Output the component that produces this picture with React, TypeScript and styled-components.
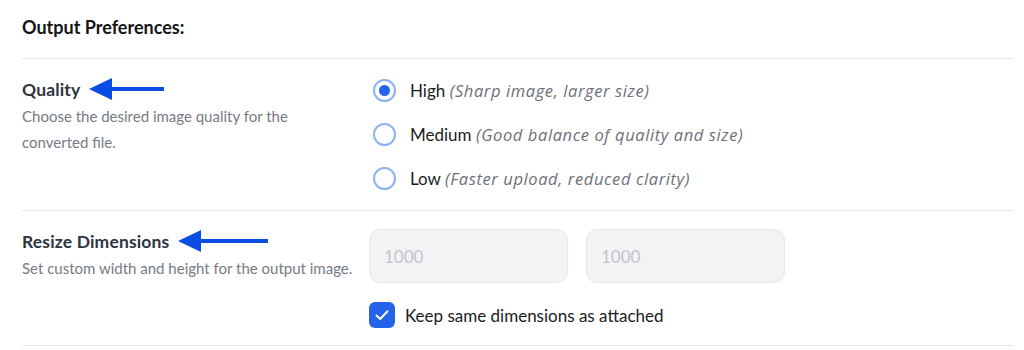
import { memo } from "react";
import styled, { createGlobalStyle } from "styled-components";

const GlobalStyle = createGlobalStyle`
  html, body {
    margin: 0;
    padding: 0;
    background: #ffffff;
  }
  body {
    font-family: "Lato", "Open Sans", sans-serif;
    color: #1f2937;
  }
`;

const qualityOptions = [
  { name: "High", hint: "(Sharp image, larger size)", checked: true },
  { name: "Medium", hint: "(Good balance of quality and size)", checked: false },
  { name: "Low", hint: "(Faster upload, reduced clarity)", checked: false },
];

const Arrow = ({ length }: { length: number }) => (
  <ArrowSvg width={length} height={24} viewBox={`0 0 ${length} 24`}>
    <path d={`M0 12 L23 1 L23 23 Z`} fill="#0a4de3" />
    <rect x={20} y={10} width={length - 20} height={4} fill="#0a4de3" />
  </ArrowSvg>
);

const App = () => {
  return (
    <>
      <GlobalStyle />
      <Page>
        <Heading>Output Preferences:</Heading>

        <Section>
          <LabelCol>
            <TitleRow>
              <Title>Quality</Title>
              <Arrow length={75} />
            </TitleRow>
            <Desc>
              Choose the desired image quality for the
              <br />
              converted file.
            </Desc>
          </LabelCol>
          <ControlCol>
            <RadioList>
              {qualityOptions.map((opt) => (
                <RadioRow key={opt.name}>
                  <RadioCircle checked={opt.checked} />
                  <OptionText>
                    {opt.name} <Hint>{opt.hint}</Hint>
                  </OptionText>
                </RadioRow>
              ))}
            </RadioList>
          </ControlCol>
        </Section>

        <Section>
          <LabelCol>
            <TitleRow>
              <Title>Resize Dimensions</Title>
              <Arrow length={90} />
            </TitleRow>
            <Desc>Set custom width and height for the output image.</Desc>
          </LabelCol>
          <ControlCol>
            <InputRow>
              <SizeInput placeholder="1000" disabled />
              <SizeInput placeholder="1000" disabled />
            </InputRow>
            <CheckRow>
              <CheckBox>
                <svg width="16" height="16" viewBox="0 0 16 16">
                  <path
                    d="M2.5 8.5 L6.2 12 L13.5 4.2"
                    fill="none"
                    stroke="#ffffff"
                    strokeWidth="2"
                    strokeLinecap="round"
                    strokeLinejoin="round"
                  />
                </svg>
              </CheckBox>
              <CheckText>Keep same dimensions as attached</CheckText>
            </CheckRow>
          </ControlCol>
        </Section>
      </Page>
    </>
  );
};

export default memo(App);

const Page = styled.div`
  width: 992px;
  padding: 16px 10px 0 22px;
`;

const Heading = styled.div`
  font-size: 18px;
  font-weight: 700;
  color: #151515;
  line-height: 22px;
  padding-bottom: 20px;
`;

const Section = styled.div`
  display: flex;
  border-top: 1.5px solid #e6e6e6;
  padding: 18px 0 20px;

  &:last-child {
    padding-bottom: 17px;
    border-bottom: 1.5px solid #e6e6e6;
  }
`;

const LabelCol = styled.div`
  width: 347px;
  flex-shrink: 0;
`;

const TitleRow = styled.div`
  display: flex;
  align-items: center;
  gap: 9px;
  height: 24px;
`;

const Title = styled.div`
  font-size: 17.5px;
  font-weight: 700;
  color: #2e3440;
  letter-spacing: 0.15px;
`;

const ArrowSvg = styled.svg`
  display: block;
`;

const Desc = styled.div`
  font-size: 15px;
  color: #767b84;
  line-height: 26px;
  margin-top: 2px;
`;

const ControlCol = styled.div`
  display: flex;
  flex-direction: column;
`;

const RadioList = styled.div`
  display: flex;
  flex-direction: column;
  gap: 21px;
  padding-left: 4px;
  padding-top: 2px;
`;

const RadioRow = styled.div`
  display: flex;
  align-items: center;
  gap: 14px;
  height: 23px;
`;

const RadioCircle = styled.span<{ checked: boolean }>`
  width: 19px;
  height: 19px;
  border-radius: 50%;
  border: 2px solid #8fb1f5;
  display: flex;
  align-items: center;
  justify-content: center;
  flex-shrink: 0;

  &::after {
    content: "";
    display: ${(p) => (p.checked ? "block" : "none")};
    width: 11px;
    height: 11px;
    border-radius: 50%;
    background: #2563eb;
  }
`;

const OptionText = styled.span`
  font-size: 17px;
  color: #1c1c1c;
`;

const Hint = styled.i`
  font-family: "Open Sans", sans-serif;
  font-size: 16.5px;
  letter-spacing: 0.6px;
  color: #6e7078;
`;

const CheckText = styled.span`
  font-size: 17px;
  color: #1c1c1c;
`;

const InputRow = styled.div`
  display: flex;
  gap: 18px;
`;

const SizeInput = styled.input`
  width: 199px;
  height: 54px;
  box-sizing: border-box;
  border: 1px solid #e6e8ec;
  border-radius: 11px;
  background: #f2f3f5;
  padding: 0 14px;
  font-family: inherit;
  font-size: 17px;
  outline: none;

  &::placeholder {
    color: #c2c4c9;
  }
`;

const CheckRow = styled.div`
  display: flex;
  align-items: center;
  gap: 10px;
  margin-top: 19px;
`;

const CheckBox = styled.span`
  width: 26px;
  height: 26px;
  border-radius: 6px;
  background: #2563eb;
  display: flex;
  align-items: center;
  justify-content: center;
`;
